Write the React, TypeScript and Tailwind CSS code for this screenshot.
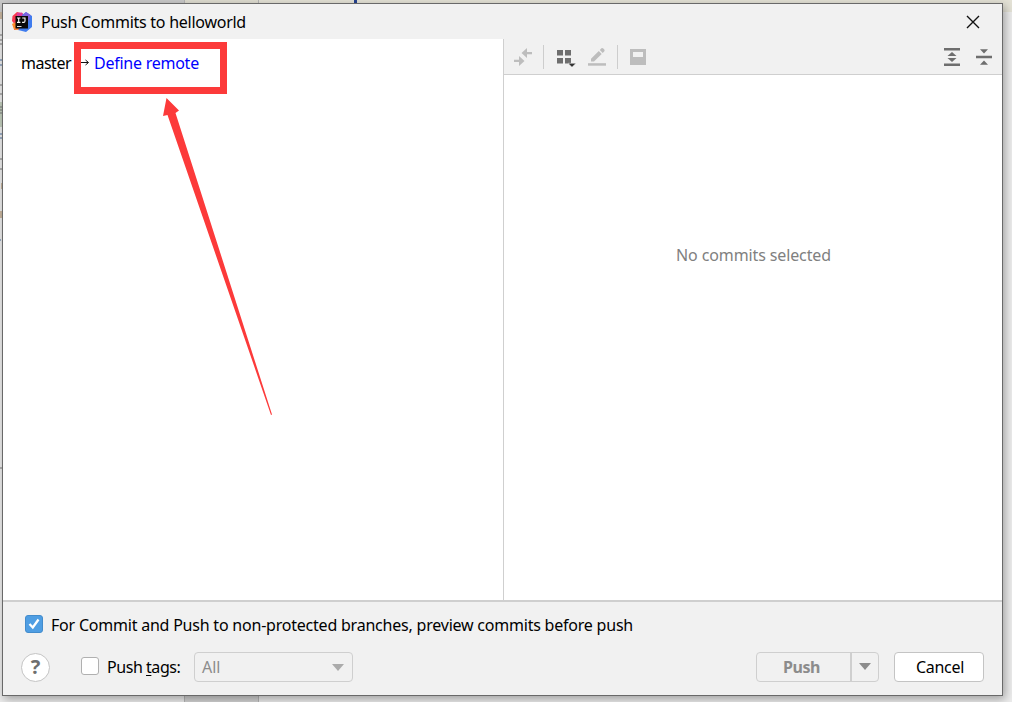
import React from "react";

function Logo() {
  return (
    <svg width="20" height="20" viewBox="0 0 20 20" className="shrink-0">
      <path d="M0.5 4 5 0 11 1.5 8 17 2 18 2.5 12 0 9Z" fill="#f8394f" />
      <path d="M0 12 4 10 7 18 2 17.5Z" fill="#ff8a2b" />
      <path d="M5 1 10 .5 12 4 5 5Z" fill="#d93a9b" />
      <path d="M10 3 14 0 20 4 20 15 14 20 6 18 12 12Z" fill="#3f7cee" />
      <path d="M10 4 14 0 18.5 3 17 9Z" fill="#7d63e0" />
      <path d="M3.5 4H16v12.5H3.5Z" fill="#090909" />
      <path d="M5 6h3.4M6.7 6v4.4M5 10.4h3.4M10.2 6h2.8v3q0 1.4-1.4 1.4h-1.5" stroke="#fff" strokeWidth="1.1" fill="none" />
      <path d="M5 14.5h4.5" stroke="#ddd" strokeWidth="1" />
    </svg>
  );
}

function TitleBar() {
  return (
    <header className="flex h-[35px] shrink-0 items-center bg-[#f1f1f1] pl-[9px] pr-[22px]">
      <Logo />
      <h1 className="ml-[9px] flex-1 pt-px text-[16px] leading-6 tracking-[-0.26px]">Push Commits to helloworld</h1>
      <svg width="14" height="14" viewBox="0 0 14 14">
        <path d="M1 1 13 13M13 1 1 13" stroke="#111" strokeWidth="1.4" />
      </svg>
    </header>
  );
}

function Toolbar() {
  return (
    <div className="flex h-[36px] shrink-0 items-center border-b border-[#cfcfcf] bg-[#f1f1f1] pl-[10px] pr-[10px]">
      <svg width="18" height="18" viewBox="0 0 18 18" className="shrink-0" fill="#bdbdbd">
        <path d="M7.5 5 13 0V3.9H18V6.2H13V10Z" />
        <path d="M10.5 13 5 8V11.8H0V14.1H5V18Z" />
      </svg>
      <i className="ml-[11px] h-6 w-px bg-[#cdcdcd]" />
      <svg width="20" height="20" viewBox="0 0 20 20" className="ml-[13px] shrink-0">
        <path d="M0 3h6v5.5H0zM8 3h6v5.5H8zM0 11h6v5.5H0zM8 11h6v5.5H8z" fill="#6e6e6e" />
        <path d="M11 16.3h8L15 20.2Z" fill="#333" stroke="#f1f1f1" strokeWidth=".5" />
      </svg>
      <svg width="18" height="20" viewBox="0 0 18 20" className="ml-[11px] shrink-0" fill="#bdbdbd">
        <path d="M3 11.8 10.8 4 13.7 6.9 6 14.5H3ZM11.8 3 13.4 1.3Q14.3.6 15.3 1.4L16.3 2.5Q17.1 3.5 16.2 4.4L14.7 5.9Z" />
        <path d="M0 16.2h18v2.5H0z" />
      </svg>
      <i className="ml-[11px] h-6 w-px bg-[#cdcdcd]" />
      <svg width="16" height="16" viewBox="0 0 16 16" className="ml-3 shrink-0">
        <path d="M0 0h16v16H0z" fill="#bdbdbd" />
        <path d="M3 3h10v5H3z" fill="#f1f1f1" />
      </svg>
      <div className="flex-1" />
      <svg width="16" height="18" viewBox="0 0 16 18" fill="#6e6e6e">
        <path d="M0 0h16v2.5H0zM0 15.5h16V18H0zM8 4l4.5 4h-9zM8 14l4.5-4h-9z" />
      </svg>
      <svg width="16" height="16" viewBox="0 0 16 16" className="ml-4" fill="#6e6e6e">
        <path d="M0 6.8h16v2.4H0zM4 .2h8L8 4.5zM4 15.8h8L8 11.5z" />
      </svg>
    </div>
  );
}

function CommitTree() {
  return (
    <section className="w-[501px] shrink-0 border-r border-[#cfcfcf] bg-white">
      <div className="mt-3 flex h-6 items-center pl-[18px] text-[16px]">
        <span className="w-[50px] whitespace-nowrap tracking-[-0.5px]">master</span>
        <svg width="10" height="8" viewBox="0 0 10 8" className="ml-[9px]">
          <path d="M0 3.5H8M5.5 1 8.5 3.5 5.5 6" stroke="#111" strokeWidth="1" fill="none" />
        </svg>
        <a className="ml-1 whitespace-nowrap tracking-[-0.25px] text-[#0000ff]">Define remote</a>
      </div>
    </section>
  );
}

function Details() {
  return (
    <section className="flex min-w-0 flex-1 flex-col bg-white">
      <Toolbar />
      <p className="mt-[168px] pl-px text-center text-[16px] leading-6 tracking-[-0.12px] text-[#808080]">No commits selected</p>
    </section>
  );
}

function Footer() {
  return (
    <footer className="h-[95px] shrink-0 border-t-2 border-[#cfcfcf] bg-[#f1f1f1] pl-[18px] pr-[18px] text-[16px]">
      <div className="mt-[11px] flex h-6 items-center pl-[4px]">
        <span className="mb-[2px] flex h-[18px] w-[18px] items-center justify-center rounded-[3px] border border-[#438ccc] bg-[#4f9ee3]">
          <svg width="14" height="14" viewBox="0 0 14 14" className="shrink-0">
            <path d="M2.5 7 5.8 10.5 11.5 2.5" stroke="#fff" strokeWidth="2.3" fill="none" />
          </svg>
        </span>
        <span className="ml-[8px] whitespace-nowrap tracking-[-0.216px]">For Commit and Push to non-protected branches, preview commits before push</span>
      </div>
      <div className="mt-[15px] flex h-[30px] items-center">
        <button className="flex h-[29px] w-[29px] items-center justify-center rounded-full border border-[#c4c4c4] bg-white text-[20px] font-bold leading-none text-[#6e6e6e]">?</button>
        <span className="mb-[2px] ml-[31px] h-[18px] w-[18px] rounded-[3px] border border-[#b0b0b0] bg-white" />
        <span className="ml-[8px] w-[74px] whitespace-nowrap tracking-[-0.45px]">
          Push <span className="underline underline-offset-2">t</span>ags:
        </span>
        <div className="ml-[13px] flex h-[30px] w-[159px] items-center justify-between rounded-[4px] border border-[#cfcfcf] pl-[7px] pr-2 text-[#8c8c8c]">
          <span>All</span>
          <svg width="12" height="7" viewBox="0 0 12 7">
            <path d="M0 0h12L6 7z" fill="#ababab" />
          </svg>
        </div>
        <div className="flex-1" />
        <div className="flex h-[30px] w-[123px] rounded-[4px] border border-[#cfcfcf] font-bold text-[#8c8c8c]">
          <button className="w-[95px] border-r-2 border-[#cfcfcf] pr-[4px] tracking-[-0.4px]">Push</button>
          <button className="flex flex-1 items-center justify-center pb-[2px]">
            <svg width="12" height="7" viewBox="0 0 12 7">
              <path d="M0 0h12L6 7z" fill="#8c8c8c" />
            </svg>
          </button>
        </div>
        <button className="ml-[15px] h-[30px] w-[90px] rounded-[4px] border border-[#c4c4c4] bg-white pl-[2px] tracking-[-0.3px]">Cancel</button>
      </div>
    </footer>
  );
}

function Backdrop() {
  return (
    <div className="absolute inset-0">
      <div className="flex h-3">
        <div className="w-[184px] bg-[#c9c9c9]" />
        <div className="w-[75px] border-x border-[#b5b5b5] bg-[#dfddd1]" />
        <div className="flex-1 bg-[#e4e2d6] pl-[95px]">
          <div className="h-2 w-[3px] bg-[#25418f]" />
        </div>
      </div>
      <div className="absolute bottom-0 left-[184px] h-3 w-[75px] border-x border-[#b5b5b5] bg-[#d2d2d2]" />
      <svg width="3" height="702" viewBox="0 0 3 702" className="absolute left-0 top-0">
        <path d="M0 102h3v25H0z" fill="#c2cebd" />
        <path d="M0 35h3M0 40h3M0 44h3M0 85h3M0 94h3M0 107h3M0 110h3M0 113h3M0 159h3M0 169h3M0 468h3" stroke="#777" />
        <path d="M0 60h2M0 65h2M0 134h2M0 138h2M0 240h1" stroke="#4b6d9b" />
        <path d="M1 12v7M2 183v6M1 211v7" stroke="#a68153" />
      </svg>
    </div>
  );
}

export default function App() {
  return (
    <main className="relative h-[702px] w-[1012px] overflow-hidden bg-[#ececec] pl-[2px] pt-[3px] font-['Noto_Sans','Open_Sans',sans-serif] text-black">
      <Backdrop />
      <div className="relative flex h-[693px] w-[1001px] flex-col border border-[#696969] shadow-[2px_3px_9px_#00000055]">
        <TitleBar />
        <div className="flex min-h-0 flex-1">
          <CommitTree />
          <Details />
        </div>
        <Footer />
      </div>
      <div className="absolute left-[74px] top-[42px] h-[52px] w-[153px] border-[7px] border-[#fc3a3a]" />
      <svg width="112" height="320" viewBox="0 0 112 320" className="absolute left-[161px] top-[97px]">
        <path d="M5.5 1 18 13.5 14.5 16 111 317.5 110 318 6.5 18 2 19Z" fill="#fc3a3a" />
      </svg>
    </main>
  );
}
